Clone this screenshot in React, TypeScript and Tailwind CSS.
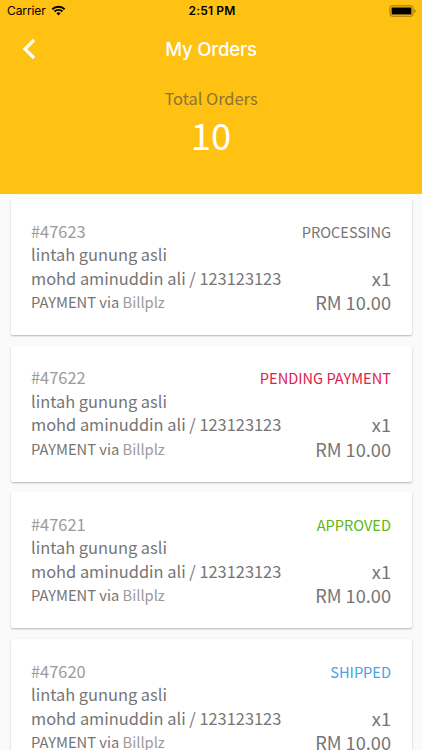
import clsx from "clsx";

type Order = {
  id: number;
  product: string;
  customer: string;
  quantity: number;
  total: string;
  gateway: string;
  status: "PROCESSING" | "PENDING PAYMENT" | "APPROVED" | "SHIPPED";
};

const orders: Order[] = [
  {
    id: 47623,
    product: "lintah gunung asli",
    customer: "mohd aminuddin ali / 123123123",
    quantity: 1,
    total: "RM 10.00",
    gateway: "Billplz",
    status: "PROCESSING",
  },
  {
    id: 47622,
    product: "lintah gunung asli",
    customer: "mohd aminuddin ali / 123123123",
    quantity: 1,
    total: "RM 10.00",
    gateway: "Billplz",
    status: "PENDING PAYMENT",
  },
  {
    id: 47621,
    product: "lintah gunung asli",
    customer: "mohd aminuddin ali / 123123123",
    quantity: 1,
    total: "RM 10.00",
    gateway: "Billplz",
    status: "APPROVED",
  },
  {
    id: 47620,
    product: "lintah gunung asli",
    customer: "mohd aminuddin ali / 123123123",
    quantity: 1,
    total: "RM 10.00",
    gateway: "Billplz",
    status: "SHIPPED",
  },
];

const statusColors = {
  PROCESSING: "text-[#757575]",
  "PENDING PAYMENT": "text-[#e0224e]",
  APPROVED: "text-[#5cb615]",
  SHIPPED: "text-[#46a3e6]",
};

function StatusBar() {
  return (
    <div className="grid h-[22px] grid-cols-3 items-center pl-[7px] pr-[5px] font-['Inter',sans-serif] text-[12px] text-black">
      <div className="flex items-center gap-[5px]">
        <span className="tracking-[-0.1px]">Carrier</span>
        <svg className="mb-px" width="15" height="11" viewBox="0 0 14 11" fill="none">
          <path d="M0.8 4.2a8.8 8.8 0 0 1 12.4 0" stroke="#000" strokeWidth="2" />
          <path d="M3 6.5a5.7 5.7 0 0 1 8 0" stroke="#000" strokeWidth="1.8" />
          <path d="M4.9 8.3a3 3 0 0 1 4.2 0L7 10.5z" fill="#000" />
        </svg>
      </div>
      <span className="text-center font-semibold tracking-[0.15px]">
        2:51 PM
      </span>
      <svg
        className="mb-px justify-self-end"
        width="28"
        height="12"
        viewBox="0 0 28 12"
        fill="none">
        <rect x="1" y="0.8" width="23" height="10.4" rx="2.2" stroke="#000" strokeOpacity="0.4" />
        <rect x="2.6" y="2.4" width="19.8" height="7.2" rx="0.6" fill="#000" />
        <path d="M25.4 4.2c1.6.5 1.6 3.1 0 3.6z" fill="#000" fillOpacity="0.45" />
      </svg>
    </div>
  );
}

function OrderCard({ order }: { order: Order }) {
  return (
    <div className="h-[136.3px] shrink-0 whitespace-nowrap rounded-[2px] bg-white px-[20.5px] pt-[20.8px] text-[16.4px] leading-[23.5px] text-[#757575] shadow-[0_1px_2px_rgba(0,0,0,0.28)]">
      <div className="flex justify-between">
        <p className="text-[#9b9b9b]">#{order.id}</p>
        <p
          className={clsx(
            "text-[14.6px]",
            statusColors[order.status]
          )}>
          {order.status}
        </p>
      </div>
      <p>{order.product}</p>
      <div className="flex justify-between">
        <p>{order.customer}</p>
        <p className="text-[18.2px]">x{order.quantity}</p>
      </div>
      <div className="flex justify-between leading-[24.5px]">
        <p className="text-[14.7px]">
          PAYMENT via <span className="text-[#9b9b9b]">{order.gateway}</span>
        </p>
        <p className="text-[18.2px]">{order.total}</p>
      </div>
    </div>
  );
}

export default function App() {
  return (
    <div className="flex h-[750px] w-[422px] flex-col overflow-hidden bg-[#fafafa] font-['Noto_Sans_CJK_SC',sans-serif]">
      <header className="h-[194px] shrink-0 bg-[#ffc112]">
        <StatusBar />
        <div className="grid h-[54px] grid-cols-[60px_1fr_60px] items-center">
          <button className="pl-[22px]">
            <svg width="14" height="22" viewBox="0 0 14 22" fill="none">
              <path d="M12 2L3 11l9 9" stroke="#fff" strokeWidth="3.2" />
            </svg>
          </button>
          <h1 className="pt-[2px] text-center font-['Inter',sans-serif] text-[18.6px] font-medium tracking-[-0.2px] text-white">
            My Orders
          </h1>
        </div>
        <div className="flex flex-col items-center pt-[10px]">
          <p className="text-[16.4px] leading-[24px] text-[#8c7339]">
            Total Orders
          </p>
          <p className="text-[36.5px] leading-[50px] text-white">10</p>
        </div>
      </header>

      {/* Order list */}
      <div className="flex flex-col gap-[10.3px] px-[10.5px] pt-[5px]">
        {orders.map((order) => (
          <OrderCard key={order.id} order={order} />
        ))}
      </div>
    </div>
  );
}
